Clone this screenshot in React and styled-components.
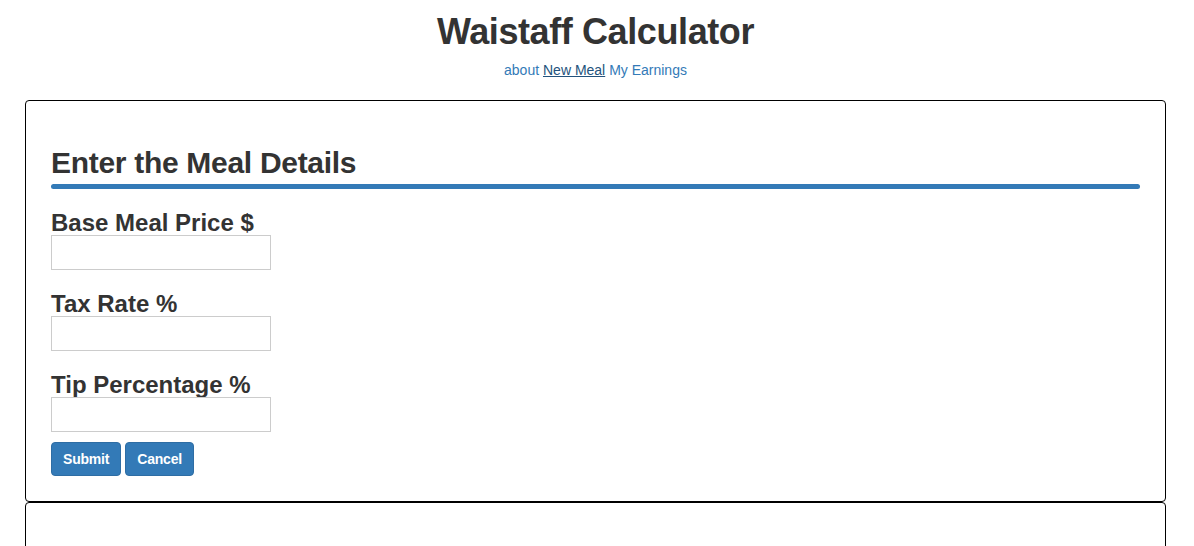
import React from "react";
import styled, { createGlobalStyle } from "styled-components";

const GlobalStyle = createGlobalStyle`
  html, body { margin: 0; padding: 0; background: #fff; }
  body {
    font-family: "Liberation Sans", Arial, Helvetica, sans-serif;
    font-size: 14px;
    line-height: 20px;
    color: #333;
  }
  * { box-sizing: border-box; }
`;

const Page = styled.div`
  padding: 0 28px 0 25px;
`;

const Header = styled.header`
  text-align: center;
`;

const Title = styled.h1`
  margin: 12px 0 0;
  font-size: 36px;
  line-height: 39.6px;
  font-weight: bold;
  letter-spacing: -0.4px;
  color: #333;
`;

const Nav = styled.nav`
  margin-top: 8px;
  font-size: 14px;
  line-height: 20px;
`;

const NavLink = styled.a`
  color: ${(p) => (p.$active ? "#23527c" : "#337ab7")};
  text-decoration: ${(p) => (p.$active ? "underline" : "none")};
  cursor: pointer;
`;

const Card = styled.section`
  border: 1px solid #000;
  border-radius: 4px;
  padding: 25px 25px 25px;
  margin-top: ${(p) => p.$mt || 0}px;
  min-height: ${(p) => p.$minH || 0}px;
`;

const Heading = styled.h2`
  margin: 20px 0 0;
  font-size: 30px;
  line-height: 33px;
  font-weight: bold;
  letter-spacing: -0.3px;
  color: #333;
`;

const Rule = styled.div`
  margin-top: 5px;
  height: 5px;
  border-radius: 3px;
  background: #337ab7;
`;

const Field = styled.div`
  margin-top: 22px;
  display: flex;
  flex-direction: column;
  align-items: flex-start;
`;

const Label = styled.label`
  font-size: 24px;
  line-height: 24px;
  font-weight: bold;
  color: #333;
`;

const Input = styled.input`
  width: 220px;
  height: 35px;
  border: 1px solid #ccc;
  border-radius: 0;
  padding: 4px 6px;
  font-family: inherit;
  font-size: 14px;
  outline: none;
  background: #fff;
`;

const Actions = styled.div`
  margin-top: 10px;
  display: flex;
  gap: 4px;
`;

const Button = styled.button`
  height: 34px;
  padding: 0 11px;
  border: 1px solid #2e6da4;
  border-radius: 4px;
  background: #337ab7;
  color: #fff;
  font-family: inherit;
  font-size: 14px;
  font-weight: bold;
  letter-spacing: -0.2px;
  cursor: pointer;
`;

export default function App() {
  return (
    <Page>
      <GlobalStyle />
      <Header>
        <Title>Waistaff Calculator</Title>
        <Nav>
          <NavLink>about</NavLink> <NavLink $active>New Meal</NavLink>{" "}
          <NavLink>My Earnings</NavLink>
        </Nav>
      </Header>
      <Card $mt={20}>
        <Heading>Enter the Meal Details</Heading>
        <Rule />
        <Field>
          <Label htmlFor="base">Base Meal Price $</Label>
          <Input id="base" type="text" />
        </Field>
        <Field>
          <Label htmlFor="tax">Tax Rate %</Label>
          <Input id="tax" type="text" />
        </Field>
        <Field>
          <Label htmlFor="tip">Tip Percentage %</Label>
          <Input id="tip" type="text" />
        </Field>
        <Actions>
          <Button type="button">Submit</Button>
          <Button type="button">Cancel</Button>
        </Actions>
      </Card>
      <Card $minH={120} />
    </Page>
  );
}
